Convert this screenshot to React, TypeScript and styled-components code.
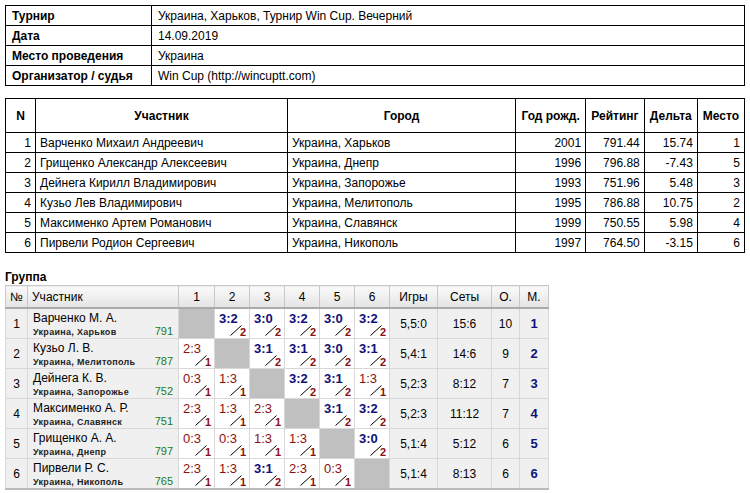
import React from 'react';
import styled, { createGlobalStyle } from 'styled-components';

const Global = createGlobalStyle`
  body { margin: 0; background: #fff; font-family: "Liberation Sans", Arial, sans-serif; font-size: 12px; color: #000; }
`;

const Page = styled.div`
  padding: 5px 5px 0 5px;
  display: flex;
  flex-direction: column;
  align-items: flex-start;
`;

const InfoTable = styled.table`
  width: 740px;
  border-collapse: collapse;
  td { border: 1px solid #000; height: 19px; padding: 0 6px; }
  td:first-child { width: 133px; font-weight: bold; }
`;

const Players = styled.table`
  width: 740px;
  border-collapse: collapse;
  margin-top: 12px;
  th, td { border: 1px solid #000; padding: 0 4px; height: 19px; }
  th { height: 33px; font-weight: bold; }
`;

const Td = styled.td<{ $align?: string }>`
  text-align: ${p => p.$align || 'left'};
`;

const GroupTitle = styled.div`
  font-weight: bold;
  margin-top: 17px;
  height: 15px;
  font-size: 12px;
`;

const Grid = styled.table`
  border-collapse: collapse;
  table-layout: fixed;
  width: 544px;
  font-family: "Liberation Sans", Tahoma, sans-serif;
  font-size: 12px;
  border-bottom: 2px solid #bbb;
  th {
    height: 21px;
    font-weight: normal;
    background: linear-gradient(#fafafa, #e4e4e4);
    border: 1px solid #c8c8c8;
    border-bottom: 2px solid #aaa;
    padding: 0 4px;
  }
  td { border: 1px solid #d8d8d8; height: 29px; padding: 0; }
`;

const Info = styled.td<{ $left?: boolean }>`
  background: #f0f0f0;
  text-align: ${p => (p.$left ? 'left' : 'center')};
`;

const NameBox = styled.div`
  display: flex;
  flex-direction: column;
  padding: 0 5px;
`;

const Name = styled.span`
  font-size: 12px;
  line-height: 14px;
`;

const Sub = styled.span`
  display: flex;
  justify-content: space-between;
  align-items: baseline;
  white-space: nowrap;
  font-size: 9px;
  font-weight: bold;
  color: #222;
  letter-spacing: 0.3px;
  b { color: #1a7a1a; font-weight: normal; font-size: 11px; letter-spacing: 0; }
`;

const Empty = styled.td`
  background: #c0c0c0;
`;

const Cell = styled.td`
  background: #fff;
  position: relative;
`;

const Score = styled.span<{ $win: boolean }>`
  position: absolute;
  left: 4px;
  top: 2px;
  font-size: 13px;
  font-weight: ${p => (p.$win ? 'bold' : 'normal')};
  color: ${p => (p.$win ? '#10107a' : '#8a1010')};
`;

const Pts = styled.span`
  position: absolute;
  right: 3px;
  bottom: 0;
  font-size: 11px;
  font-weight: bold;
  color: #8a1010;
`;

const Slash = styled.svg`
  position: absolute;
  right: 7px;
  bottom: 2px;
`;

const Place = styled.span`
  color: #10107a;
  font-weight: bold;
  font-size: 13px;
`;

const players = [
  ['1', 'Варченко Михаил Андреевич', 'Украина, Харьков', '2001', '791.44', '15.74', '1'],
  ['2', 'Грищенко Александр Алексеевич', 'Украина, Днепр', '1996', '796.88', '-7.43', '5'],
  ['3', 'Дейнега Кирилл Владимирович', 'Украина, Запорожье', '1993', '751.96', '5.48', '3'],
  ['4', 'Кузьо Лев Владимирович', 'Украина, Мелитополь', '1995', '786.88', '10.75', '2'],
  ['5', 'Максименко Артем Романович', 'Украина, Славянск', '1999', '750.55', '5.98', '4'],
  ['6', 'Пирвели Родион Сергеевич', 'Украина, Никополь', '1997', '764.50', '-3.15', '6'],
];

const group = [
  { n: 'Варченко М. А.', c: 'Украина, Харьков', r: '791', s: ['', '3:2', '3:0', '3:2', '3:0', '3:2'], g: '5,5:0', sets: '15:6', o: '10' },
  { n: 'Кузьо Л. В.', c: 'Украина, Мелитополь', r: '787', s: ['2:3', '', '3:1', '3:1', '3:0', '3:1'], g: '5,4:1', sets: '14:6', o: '9' },
  { n: 'Дейнега К. В.', c: 'Украина, Запорожье', r: '752', s: ['0:3', '1:3', '', '3:2', '3:1', '1:3'], g: '5,2:3', sets: '8:12', o: '7' },
  { n: 'Максименко А. Р.', c: 'Украина, Славянск', r: '751', s: ['2:3', '1:3', '2:3', '', '3:1', '3:2'], g: '5,2:3', sets: '11:12', o: '7' },
  { n: 'Грищенко А. А.', c: 'Украина, Днепр', r: '797', s: ['0:3', '0:3', '1:3', '1:3', '', '3:0'], g: '5,1:4', sets: '5:12', o: '6' },
  { n: 'Пирвели Р. С.', c: 'Украина, Никополь', r: '765', s: ['2:3', '1:3', '3:1', '2:3', '0:3', ''], g: '5,1:4', sets: '8:13', o: '6' },
];

const widths = [22, 151, 36, 35, 35, 35, 35, 35, 48, 54, 28, 29];

const ScoreCell = ({ v }: { v: string }) => {
  if (!v) return <Empty />;
  const win = v.startsWith('3');
  return (
    <Cell>
      <Score $win={win}>{v}</Score>
      <Slash width="12" height="11" viewBox="0 0 12 11">
        <line x1="0.5" y1="10.5" x2="11.5" y2="0.5" stroke="#000" strokeWidth="1" />
      </Slash>
      <Pts>{win ? 2 : 1}</Pts>
    </Cell>
  );
};

export default function App() {
  return (
    <Page>
      <Global />
      <InfoTable>
        <tbody>
          <tr><td>Турнир</td><td>Украина, Харьков, Турнир Win Cup. Вечерний</td></tr>
          <tr><td>Дата</td><td>14.09.2019</td></tr>
          <tr><td>Место проведения</td><td>Украина</td></tr>
          <tr><td>Организатор / судья</td><td>Win Cup (http://wincuptt.com)</td></tr>
        </tbody>
      </InfoTable>
      <Players>
        <thead>
          <tr>
            <th style={{ width: 21 }}>N</th>
            <th style={{ width: 243 }}>Участник</th>
            <th style={{ width: 219 }}>Город</th>
            <th>Год рожд.</th>
            <th>Рейтинг</th>
            <th>Дельта</th>
            <th>Место</th>
          </tr>
        </thead>
        <tbody>
          {players.map(p => (
            <tr key={p[0]}>
              <Td $align="right">{p[0]}</Td>
              <Td>{p[1]}</Td>
              <Td>{p[2]}</Td>
              <Td $align="right">{p[3]}</Td>
              <Td $align="right">{p[4]}</Td>
              <Td $align="right">{p[5]}</Td>
              <Td $align="right">{p[6]}</Td>
            </tr>
          ))}
        </tbody>
      </Players>
      <GroupTitle>Группа</GroupTitle>
      <Grid>
        <colgroup>
          {widths.map((w, i) => <col key={i} style={{ width: w }} />)}
        </colgroup>
        <thead>
          <tr>
            <th>№</th>
            <th style={{ textAlign: 'left' }}>Участник</th>
            {[1, 2, 3, 4, 5, 6].map(i => <th key={i}>{i}</th>)}
            <th>Игры</th>
            <th>Сеты</th>
            <th>О.</th>
            <th>М.</th>
          </tr>
        </thead>
        <tbody>
          {group.map((r, i) => (
            <tr key={i}>
              <Info>{i + 1}</Info>
              <Info $left>
                <NameBox>
                  <Name>{r.n}</Name>
                  <Sub>{r.c}<b>{r.r}</b></Sub>
                </NameBox>
              </Info>
              {r.s.map((v, j) => <ScoreCell key={j} v={v} />)}
              <Info>{r.g}</Info>
              <Info>{r.sets}</Info>
              <Info>{r.o}</Info>
              <Info><Place>{i + 1}</Place></Info>
            </tr>
          ))}
        </tbody>
      </Grid>
    </Page>
  );
}
